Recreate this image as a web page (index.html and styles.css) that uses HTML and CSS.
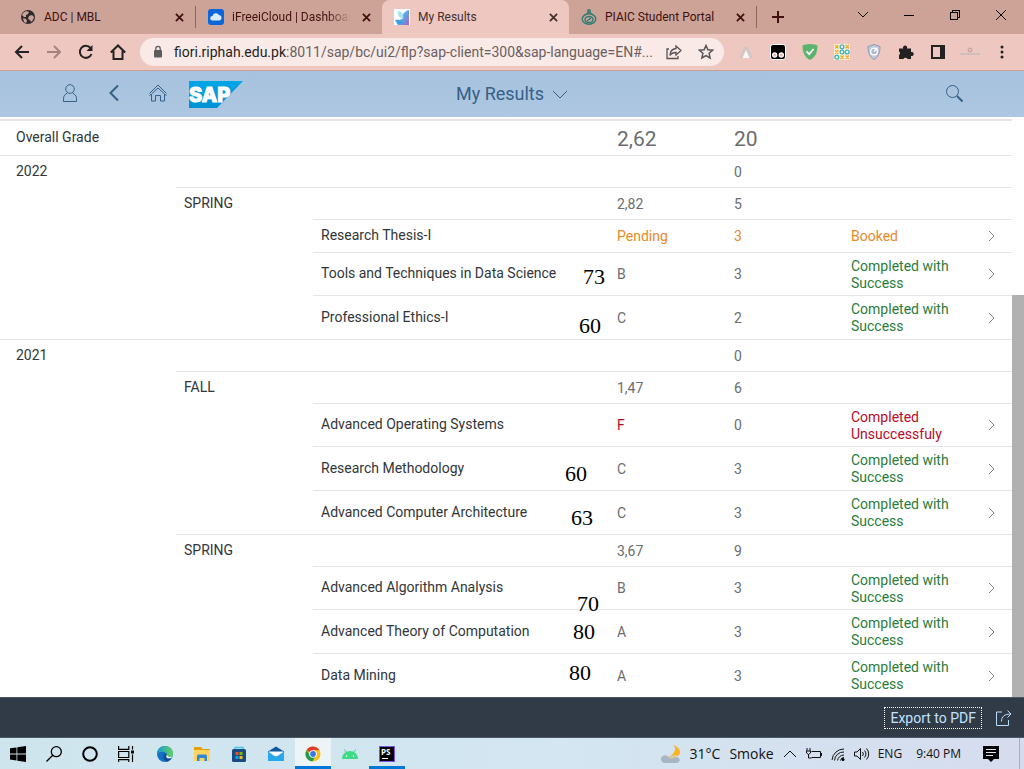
FILE: index.html
```
<!DOCTYPE html>
<html lang="en">
<head>
<meta charset="utf-8">
<title>My Results</title>
<link rel="stylesheet" href="styles.css">
</head>
<body>
<header class="browser">
  <div class="tabs">
    <div class="tab tab-first">
      <svg class="favicon" viewBox="0 0 16 16"><circle cx="8" cy="8" r="7" fill="#2b2b2d"/><path d="M3 4l3-2 3 1-1 2-2 1 0 2-2 0-2-2zM9 7l3-1 2 2-1 3-2 2-1-2-2-1zM3 9l3 1 1 2-1 2-2-1z" fill="#cda397"/></svg>
      <span class="tab-title">ADC | MBL</span>
      <button class="close" aria-label="Close tab"><svg viewBox="0 0 10 10"><path d="M1 1l8 8M9 1l-8 8"/></svg></button>
    </div>
    <div class="tab tab-second">
      <svg class="favicon" viewBox="0 0 16 16"><rect width="16" height="16" rx="3" fill="#0b66d8"/><path d="M4.500 11.500a2.300 2.300 0 0 1 0-4.600 3.500 3.500 0 0 1 6.500-.8 2.800 2.800 0 0 1 .8 5.400z" fill="#d8ecff"/></svg>
      <span class="tab-title fade">iFreeiCloud | Dashboard</span>
      <button class="close" aria-label="Close tab"><svg viewBox="0 0 10 10"><path d="M1 1l8 8M9 1l-8 8"/></svg></button>
    </div>
    <div class="tab active">
      <svg class="favicon" viewBox="0 0 16 16"><defs><linearGradient id="petal" x1="0" y1="0" x2="1" y2="1"><stop offset="0" stop-color="#b9d4f3"/><stop offset=".5" stop-color="#5fa6e4"/><stop offset="1" stop-color="#a263c4"/></linearGradient></defs><rect width="16" height="16" fill="#fff"/><path d="M15 1v15H4c-1-1-2-2-1.500-4 3-1 4-2 6-2C7 7 10 2 15 1z" fill="url(#petal)"/><path d="M4 2c4 0 6 4 5 8C5 9 3 5 4 2z" fill="#a7e2f5"/><path d="M1 11c4-1 8 0 8 3-3 2-6 1-8-3z" fill="#3aa1e2"/></svg>
      <span class="tab-title">My Results</span>
      <button class="close" aria-label="Close tab"><svg viewBox="0 0 10 10"><path d="M1 1l8 8M9 1l-8 8"/></svg></button>
    </div>
    <div class="tab">
      <svg class="favicon" viewBox="0 0 16 16" fill="none" stroke="#2f7c72" stroke-width="1.400"><ellipse cx="8" cy="10" rx="6.800" ry="5.200"/><ellipse cx="8" cy="10.500" rx="4" ry="3"/><circle cx="8" cy="2" r="1.300"/><path d="M8 3l-4 3M8 3l4 3M6 12l4-3"/></svg>
      <span class="tab-title">PIAIC Student Portal</span>
      <button class="close" aria-label="Close tab"><svg viewBox="0 0 10 10"><path d="M1 1l8 8M9 1l-8 8"/></svg></button>
    </div>
    <button class="new-tab" aria-label="New tab"><svg viewBox="0 0 12 12"><path d="M6 0v12M0 6h12"/></svg></button>
    <div class="window-buttons">
      <button aria-label="Search tabs"><svg viewBox="0 0 12 12"><path d="M1 3l5 5 5-5"/></svg></button>
      <button aria-label="Minimize"><svg viewBox="0 0 12 12" shape-rendering="crispEdges"><path d="M1 6.500h10"/></svg></button>
      <button aria-label="Restore"><svg viewBox="0 0 12 12" shape-rendering="crispEdges"><path d="M1.500 3.500h7v7h-7zM3.500 3V1.500h7v7H9"/></svg></button>
      <button aria-label="Close"><svg viewBox="0 0 12 12"><path d="M1 1l10 10M11 1L1 11"/></svg></button>
    </div>
  </div>
  <div class="toolbar">
    <nav class="nav-buttons">
      <button aria-label="Back"><svg viewBox="0 0 16 16"><path d="M15 8H2M8 2L2 8l6 6"/></svg></button>
      <button class="dim" aria-label="Forward"><svg viewBox="0 0 16 16"><path d="M1 8h13M8 2l6 6-6 6"/></svg></button>
      <button aria-label="Reload"><svg viewBox="0 0 16 16"><path d="M13.500 10A6 6 0 1 1 12.500 4"/><path d="M14.500 1v6h-6z" fill="#222" stroke="none"/></svg></button>
      <button aria-label="Home"><svg viewBox="0 0 16 16"><path d="M.8 8.500L8 1.500l7.200 7M3.500 7v8h9V7"/></svg></button>
    </nav>
    <div class="address">
      <svg class="lock" viewBox="0 0 10 14"><rect x="1" y="5" width="8" height="7.500" rx="1" fill="#5f5a5d"/><path d="M2.800 5V3.500a2.200 2.200 0 0 1 4.400 0V5" fill="none" stroke="#5f5a5d" stroke-width="1.300"/></svg>
      <span class="url"><b>fiori.riphah.edu.pk</b>:8011/sap/bc/ui2/flp?sap-client=300&amp;sap-language=EN#...</span>
      <button aria-label="Share"><svg viewBox="0 0 16 16" stroke-width="1.300"><path d="M3 5H1v9.500h11V12M10 2l5 4.500-5 4.500V8.500c-3 0-5 1-6 3 0-4 2-6.500 6-7z"/></svg></button>
      <button aria-label="Bookmark"><svg viewBox="0 0 16 16" stroke-width="1.500"><path d="M8 1.500l1.900 4.300 4.700.4-3.500 3.100 1 4.600L8 11.500l-4.100 2.400 1-4.600-3.500-3.100 4.700-.4z"/></svg></button>
    </div>
    <div class="extensions">
      <button aria-label="Extension"><svg viewBox="0 0 16 16"><path d="M1 14L6 3h4l5 11h-3L8 6l-4 8z" fill="#cfc8c6"/><path d="M4.500 14L8 6l3.500 8z" fill="#f8f6f5"/></svg></button>
      <button aria-label="Tampermonkey"><svg viewBox="0 0 16 16"><rect x=".5" y=".5" width="15" height="15" rx="2.500" fill="#000" stroke="#fff"/><circle cx="4.700" cy="11" r="2.700" fill="#fff"/><circle cx="11.300" cy="11" r="2.700" fill="#fff"/><circle cx="4.700" cy="11" r="1.500" fill="#e9b9ae"/><circle cx="11.300" cy="11" r="1.500" fill="#e9b9ae"/></svg></button>
      <button aria-label="AdGuard"><svg viewBox="0 0 16 16"><path d="M8 0c3 0 6 .8 7.500 1.500C15.500 9 13 13.500 8 16 3 13.500.5 9 .5 1.500 2 .8 5 0 8 0z" fill="#5bb46c"/><path d="M4.500 7.500l2.700 2.700L11.500 5" fill="none" stroke="#fff" stroke-width="1.800"/></svg></button>
      <button aria-label="Puzzle grid"><svg viewBox="0 0 16 16"><path d="M0 0h16v16H0z" fill="#fff3da"/><g fill="none" stroke-width="1.400"><path d="M1 1l3.500 3.500M4.500 1L1 4.500M11.500 1L15 4.500M15 1l-3.500 3.500M1 6.300l3.500 3.500M4.500 6.300L1 9.800M6.300 11.500l3.500 3.500M9.800 11.500L6.300 15M11.500 11.500L15 15M15 11.500L11.500 15" stroke="#f3a92e"/><circle cx="8" cy="2.800" r="1.900" stroke="#39b7c2"/><circle cx="8" cy="8" r="1.900" stroke="#39b7c2"/><circle cx="13.200" cy="8" r="1.900" stroke="#39b7c2"/><circle cx="2.800" cy="13.200" r="1.900" stroke="#39b7c2"/></g></svg></button>
      <button aria-label="Privacy shield"><svg viewBox="0 0 16 16"><path d="M8 .5l6 2c0 6-1.500 10.500-6 13C3.500 13 2 8.500 2 2.500z" fill="#bfc9da" stroke="#8c9ab2"/><circle cx="8" cy="7.500" r="3.400" fill="#aab8cd" stroke="#fff" stroke-width="1.300"/><path d="M8 7.500L11 4" stroke="#fff" stroke-width="1.200"/></svg></button>
      <button aria-label="Extensions"><svg viewBox="0 0 16 16"><path d="M1 4.500h4.200a2.100 2.100 0 1 1 3.800 0h4V8a2.100 2.100 0 1 1 0 4v3H9.500a2.200 2.200 0 0 0-4 0H1v-4a2.100 2.100 0 0 0 0-3.600z" fill="#222"/></svg></button>
      <button aria-label="Side panel"><svg viewBox="0 0 16 16"><path d="M2 2h12v12H2z" fill="none" stroke="#222" stroke-width="2"/><path d="M10 2h4v12h-4z" fill="#222"/></svg></button>
      <button aria-label="Profile"><svg viewBox="0 0 20 16"><circle cx="10" cy="6" r="2.500" fill="#c9a9a5"/><circle cx="10" cy="6" r="1" fill="#eec8c0"/><path d="M0 10h20" stroke="#c9b8bd" stroke-width="1.500"/></svg></button>
      <button aria-label="Menu"><svg viewBox="0 0 16 16" fill="#222"><circle cx="8" cy="3" r="1.500"/><circle cx="8" cy="8" r="1.500"/><circle cx="8" cy="13" r="1.500"/></svg></button>
    </div>
  </div>
</header>

<div class="shell">
  <div class="shell-left">
    <button aria-label="User"><svg viewBox="0 0 20 20"><circle cx="10" cy="6" r="4.300"/><path d="M3.500 18.500v-3c0-3 2-4.500 3.800-5.300M12.700 10.200c1.800.8 3.800 2.300 3.800 5.300v3h-13"/></svg></button>
    <button aria-label="Back"><svg viewBox="0 0 20 20" stroke-width="2"><path d="M14 2.500L6.500 10l7.500 7.500"/></svg></button>
    <button aria-label="Home"><svg viewBox="0 0 20 20"><path d="M1.500 10.500L10 2l8.500 8.500M1.500 12.500l2-1.500v7h4v-5.500h5V18h4v-7l2 1.500M4 10.500L10 5l6 5.500"/></svg></button>
    <svg class="sap-logo" viewBox="0 0 54 27"><defs><linearGradient id="sap" x1="0" y1="0" x2="0" y2="1"><stop offset="0" stop-color="#00a6e6"/><stop offset="1" stop-color="#0090d4"/></linearGradient></defs><path d="M0 0h54L28 27H0z" fill="url(#sap)"/><text x="0" y="21" class="sap-text">SAP</text></svg>
  </div>
  <button class="shell-title">My Results <svg viewBox="0 0 16 16"><path d="M1 6l7 7 7-7"/></svg></button>
  <div class="shell-right"><button aria-label="Search"><svg viewBox="0 0 20 20"><circle cx="8.500" cy="8.500" r="6"/><path d="M13 13l5.500 5.500" stroke-width="2"/></svg></button></div>
</div>

<main class="content">
  <div class="results">
  <table>
    <colgroup><col class="c-year"><col class="c-term"><col><col class="c-value"><col class="c-value"><col class="c-status"><col class="c-arrow"></colgroup>
    <tbody>
    <tr class="overall"><th colspan="3">Overall Grade</th><td>2,62</td><td>20</td><td></td><td></td></tr>
    <tr><th>2022</th><td></td><td></td><td></td><td>0</td><td></td><td></td></tr>
    <tr><td class="blank"></td><th>SPRING</th><td></td><td>2,82</td><td>5</td><td></td><td></td></tr>
    <tr class="pending"><td class="blank" colspan="2"></td><th>Research Thesis-I</th><td>Pending</td><td>3</td><td>Booked</td><td class="arrow"><svg viewBox="0 0 8 12"><path d="M1 1l5 5-5 5"/></svg></td></tr>
    <tr class="course lead"><td class="blank" colspan="2"></td><th>Tools and Techniques in Data Science</th><td>B</td><td>3</td><td class="good">Completed with Success</td><td class="arrow"><svg viewBox="0 0 8 12"><path d="M1 1l5 5-5 5"/></svg></td></tr>
    <tr class="course"><td class="blank" colspan="2"></td><th>Professional Ethics-I</th><td>C</td><td>2</td><td class="good">Completed with Success</td><td class="arrow"><svg viewBox="0 0 8 12"><path d="M1 1l5 5-5 5"/></svg></td></tr>
    <tr><th>2021</th><td></td><td></td><td></td><td>0</td><td></td><td></td></tr>
    <tr><td class="blank"></td><th>FALL</th><td></td><td>1,47</td><td>6</td><td></td><td></td></tr>
    <tr class="course lead"><td class="blank" colspan="2"></td><th>Advanced Operating Systems</th><td class="bad">F</td><td>0</td><td class="bad">Completed Unsuccessfuly</td><td class="arrow"><svg viewBox="0 0 8 12"><path d="M1 1l5 5-5 5"/></svg></td></tr>
    <tr class="course"><td class="blank" colspan="2"></td><th>Research Methodology</th><td>C</td><td>3</td><td class="good">Completed with Success</td><td class="arrow"><svg viewBox="0 0 8 12"><path d="M1 1l5 5-5 5"/></svg></td></tr>
    <tr class="course"><td class="blank" colspan="2"></td><th>Advanced Computer Architecture</th><td>C</td><td>3</td><td class="good">Completed with Success</td><td class="arrow"><svg viewBox="0 0 8 12"><path d="M1 1l5 5-5 5"/></svg></td></tr>
    <tr><td class="blank"></td><th>SPRING</th><td></td><td>3,67</td><td>9</td><td></td><td></td></tr>
    <tr class="course lead"><td class="blank" colspan="2"></td><th>Advanced Algorithm Analysis</th><td>B</td><td>3</td><td class="good">Completed with Success</td><td class="arrow"><svg viewBox="0 0 8 12"><path d="M1 1l5 5-5 5"/></svg></td></tr>
    <tr class="course"><td class="blank" colspan="2"></td><th>Advanced Theory of Computation</th><td>A</td><td>3</td><td class="good">Completed with Success</td><td class="arrow"><svg viewBox="0 0 8 12"><path d="M1 1l5 5-5 5"/></svg></td></tr>
    <tr class="course"><td class="blank" colspan="2"></td><th>Data Mining</th><td>A</td><td>3</td><td class="good">Completed with Success</td><td class="arrow"><svg viewBox="0 0 8 12"><path d="M1 1l5 5-5 5"/></svg></td></tr>
    </tbody>
  </table>
  <span class="note note-tools">73</span>
  <span class="note note-ethics">60</span>
  <span class="note note-method">60</span>
  <span class="note note-arch">63</span>
  <span class="note note-algo">70</span>
  <span class="note note-theory">80</span>
  <span class="note note-mining">80</span>
  </div>
  <div class="scrollbar"><div class="thumb"></div></div>
</main>

<footer class="actions">
  <button class="export">Export to PDF</button>
  <button class="share" aria-label="Share"><svg viewBox="0 0 18 18"><path d="M7 3H1.500v13.500h12V11M6.500 12.500c0-5 3-7.500 9.500-7.500M12.500 1.500L16 5l-3.500 3.500"/></svg></button>
</footer>

<div class="taskbar">
  <div class="system">
    <button aria-label="Start"><svg viewBox="0 0 16 16"><path d="M0 2.300l6.500-.9v6H0zM7.300 1.300L16 0v7.400H7.300zM0 8.400h6.500v6L0 13.500zM7.300 8.400H16V16l-8.700-1.300z"/></svg></button>
    <button aria-label="Search"><svg viewBox="0 0 16 16" fill="none" stroke="#000" stroke-width="1.300"><circle cx="10.300" cy="5.700" r="5"/><path d="M6.700 9.300L.5 15.500"/></svg></button>
    <button aria-label="Cortana"><svg viewBox="0 0 16 16" fill="none" stroke="#000" stroke-width="2"><circle cx="8" cy="8" r="6.800"/></svg></button>
    <button aria-label="Task view"><svg viewBox="0 0 16 16" fill="none" stroke="#000" stroke-width="1.200"><path d="M.6 0v3.400h10.200V0M.6 5.500h10.200v6H.6zM.6 16v-2.400h10.200V16M14.500 0v3.500M14.500 8.500V16"/><path d="M13 4.500h3v3h-3z" fill="#000" stroke="none"/></svg></button>
  </div>
  <div class="apps">
    <button aria-label="Edge"><svg viewBox="0 0 16 16"><defs><linearGradient id="edge" x1="0" y1="0" x2="1" y2="0"><stop offset="0" stop-color="#1599d9"/><stop offset="1" stop-color="#63d35b"/></linearGradient></defs><circle cx="8" cy="8" r="8" fill="#1372c4"/><path d="M0 8a8 8 0 0 1 16 0c0 3-2 4-4 4-2.500 0-3-1-2-2.500C11 6.500 4 3.500 0 8z" fill="url(#edge)"/><path d="M9.500 10c-1.500 2 1 3.500 5 2.300-1.500 2-3.500 3-4 3.200C6 14.500 5 9 9 7.500c1 .5 1 1.500.5 2.500z" fill="#114b8e"/><path d="M9.700 8.300c1 3 3.800 3.700 6 1.600-1 2.300-5.500 3.400-6.300.8z" fill="#fff"/></svg></button>
    <button aria-label="Files"><svg viewBox="0 0 16 16"><path d="M0 1h7l1.500 2H16v12H0z" fill="#e3a008"/><path d="M0 4h16v11H0z" fill="#ffd35c"/><path d="M3 15v-5l1-1.500h8l1 1.500v5h-2.500v-3h-5v3z" fill="#2d89d6"/></svg></button>
    <button aria-label="Store"><svg viewBox="0 0 16 16"><path d="M4 4V1.500h8V4" fill="none" stroke="#43c3f0" stroke-width="1.300"/><rect x="1" y="3" width="14" height="13" rx="1.500" fill="#1a4a80"/><path d="M4.500 6h3v3h-3z" fill="#f25022"/><path d="M8.500 6h3v3h-3z" fill="#7fba00"/><path d="M4.500 10h3v3h-3z" fill="#00a4ef"/><path d="M8.500 10h3v3h-3z" fill="#ffb900"/></svg></button>
    <button aria-label="Mail"><svg viewBox="0 0 16 16"><path d="M0 5.500L8 .5l8 5V15H0z" fill="#0c5aa0"/><path d="M1 5.500h14v5H1z" fill="#fff"/><path d="M0 5.500L8 11l8-5.500V15H0z" fill="#26a8ea"/></svg></button>
    <button class="current" aria-label="Chrome"><svg viewBox="0 0 16 16"><circle cx="8" cy="8" r="7.500" fill="#fbc116"/><path d="M8 8L1.500 4.200A7.500 7.500 0 0 1 14.500 4.300H8z" fill="#e33b2e"/><path d="M1.500 4.200a7.500 7.500 0 0 0 5.800 11.300L10.500 10 5 9z" fill="#239a4b"/><circle cx="8" cy="8" r="3.800" fill="#fff"/><circle cx="8" cy="8" r="2.900" fill="#3b78e7"/></svg></button>
    <button aria-label="Android"><svg viewBox="0 0 16 16"><path d="M0 13a8 8 0 0 1 16 0z" fill="#3ddc84"/><path d="M2.500 3.500l2 3.500M13.500 3.500l-2 3.500" stroke="#3ddc84"/><circle cx="4.500" cy="10" r=".8" fill="#fff"/><circle cx="11.500" cy="10" r=".8" fill="#fff"/></svg></button>
    <button class="running" aria-label="PhpStorm"><svg viewBox="0 0 16 16"><rect width="16" height="16" fill="#7b52f4"/><path d="M1 1h14v14H1z"/><path d="M3 12.500h6" stroke="#fff"/><text x="2" y="9" class="ps-text">PS</text></svg></button>
  </div>
  <div class="tray">
    <button class="weather"><svg viewBox="0 0 22 20"><path d="M14 1c3 2 3 7-2 10l7 1c4-3 2-9-5-11z" fill="#f9b522"/><path d="M5 19a5 4 0 0 1-1-7c2-1 4-1 5 1 3-2 7-2 8 0 5 0 5 6 0 6z" fill="#a9b5c2"/><path d="M9 13c3-2 7-2 8 0-3 2-7 2-8 0z" fill="#dcc795"/></svg><span>31°C</span><span>Smoke</span></button>
    <button aria-label="Show hidden icons"><svg viewBox="0 0 16 16"><path d="M2 11l6-6 6 6"/></svg></button>
    <button aria-label="Battery"><svg viewBox="0 0 16 16"><path d="M5.500 5.500h9v6h-9M15.500 7v3M1 2v3M4 2v3M.5 5h4v2l-2 1.500-2-1.500zM2.500 8v4h3"/></svg></button>
    <button aria-label="Wi-Fi"><svg viewBox="0 0 16 16"><path d="M2 14A12 12 0 0 1 14 3M4.500 14.500A9 9 0 0 1 14 6M7.500 14.500A6.500 6.500 0 0 1 14 9M10.500 14.500a3.500 3.500 0 0 1 3.500-3"/><circle cx="13" cy="13.500" r="1.500" fill="#000" stroke="none"/></svg></button>
    <button aria-label="Volume"><svg viewBox="0 0 16 16"><path d="M.5 6h2.500l3.500-3.500v11L3 10H.5zM8.500 6a3 3 0 0 1 0 4M10.500 4.500a5 5 0 0 1 0 7M12.500 2.500a8 8 0 0 1 0 11"/></svg></button>
    <button class="small">ENG</button>
    <button class="small clock">9:40 PM</button>
    <button class="notify" aria-label="Notifications"><svg viewBox="0 0 16 16"><path d="M0 0h16v13h-5l-3 3-3-3H0z" fill="#000" stroke="none"/><path d="M3 3.500h10M3 6.500h10M3 9.500h7" stroke="#dfe6f0"/></svg></button>
  </div>
</div>
</body>
</html>
```
FILE: styles.css
```
* { box-sizing: border-box; }
body {
  margin: 0;
  height: 100vh;
  display: flex;
  flex-direction: column;
  overflow: hidden;
  background: #fff;
  font-family: Roboto, sans-serif;
  font-size: 14px;
  color: #32363a;
}
button {
  border: 0;
  margin: 0;
  padding: 0;
  background: none;
  font: inherit;
  color: inherit;
  display: flex;
  align-items: center;
  justify-content: center;
}
svg { display: block; flex: none; }

/* Browser frame */
.tabs { display: flex; height: 34px; background: #cda397; color: #42100f; }
.tab {
  flex: 0 0 187px;
  min-width: 0;
  display: flex;
  align-items: center;
  gap: 8px;
  padding: 0 9px 0 12px;
  font-size: 12px;
}
.tab-first { flex-basis: 196px; padding-left: 20px; border-right: 1px solid; border-image: linear-gradient(transparent 20%, #93645c 20%, #93645c 80%, transparent 80%) 1; }
.tab-second { flex-basis: 186px; border-bottom-right-radius: 8px; }
.tab.active { background: #eec8c0; border-radius: 8px 8px 0 0; color: #45302e; }
.favicon { width: 16px; height: 16px; }
.tab-title { flex: 1; min-width: 0; white-space: nowrap; overflow: hidden; }
.fade { mask-image: linear-gradient(90deg, #000 80%, transparent); }
.close { width: 14px; height: 14px; }
.close svg { width: 9px; height: 9px; stroke: currentColor; stroke-width: 2; }
.new-tab { width: 43px; border-left: 1px solid; border-image: linear-gradient(transparent 20%, #93645c 20%, #93645c 80%, transparent 80%) 1; }
.new-tab svg { width: 12px; height: 12px; stroke: #42100f; stroke-width: 2; }
.window-buttons { display: flex; margin-left: auto; height: 29px; }
.window-buttons button { width: 46px; }
.window-buttons svg { width: 12px; height: 12px; fill: none; stroke: #000; }
.toolbar {
  display: flex;
  align-items: center;
  height: 37px;
  padding: 0 6px;
  background: #eec8c0;
  border-bottom: 1px solid #c9a097;
}
.nav-buttons, .extensions { display: flex; }
.nav-buttons button, .extensions button { width: 32px; height: 28px; }
.nav-buttons svg { width: 16px; height: 16px; fill: none; stroke: #222; stroke-width: 2; }
.nav-buttons .dim svg { stroke: #a5827e; }
.extensions svg { height: 16px; }
.address {
  flex: 1;
  display: flex;
  align-items: center;
  height: 28px;
  min-width: 0;
  margin: 0 6px;
  padding: 0 2px 0 13px;
  border-radius: 14px;
  background: #f9eae8;
}
.lock { width: 10px; height: 14px; }
.url { flex: 1; margin-left: 11px; font-size: 14px; color: #69605f; white-space: nowrap; overflow: hidden; }
.url b { font-weight: 400; color: #251f20; }
.address button { width: 32px; height: 28px; }
.address button svg { width: 16px; height: 16px; fill: none; stroke: #5a5254; }

/* Application header */
.shell {
  display: grid;
  grid-template-columns: 1fr auto 1fr;
  align-items: center;
  height: 46px;
  padding-bottom: 2px;
  background: linear-gradient(#a7c2de, #adc7e1);
  color: #346187;
}
.shell svg { fill: none; stroke: #346187; }
.shell-left { display: flex; align-items: center; padding-left: 48px; }
.shell-left button, .shell-right button { width: 44px; height: 44px; }
.shell-left button svg, .shell-right button svg { width: 20px; height: 20px; }
.shell .sap-logo { width: 54px; height: 27px; margin: 2px 0 0 9px; stroke: none; }
.sap-text { font: 800 20px Inter, sans-serif; fill: #fff; stroke: #fff; stroke-width: 1; }
.shell-title { gap: 8px; font-size: 18px; }
.shell-title svg { width: 16px; height: 16px; }
.shell-right { display: flex; justify-content: flex-end; padding-right: 48px; }

/* Results */
.content { flex: 1; min-height: 0; display: flex; overflow: hidden; }
.results { flex: 1; position: relative; padding-top: 2px; }
table { width: 100%; table-layout: fixed; border-collapse: separate; border-spacing: 0; }
.c-year { width: 176px; }
.c-term { width: 137px; }
.c-value { width: 117px; }
.c-status { width: 132px; }
.c-arrow { width: 37px; }
th, td {
  height: 32px;
  padding: 0 8px;
  border-top: 1px solid #e5e5e5;
  text-align: left;
  vertical-align: middle;
  font-weight: 400;
  line-height: 17px;
}
th { padding-bottom: 1px; }
tr > th:first-child { padding-left: 16px; }
td { padding-top: 1px; color: #6a6d70; }
.blank { border-top: 0; }
.overall th, .overall td { height: 36px; border-top: 2px solid #e5e5e5; }
.overall td { font-size: 21px; padding-top: 3px; }
.pending th, .pending td { height: 33px; }
.pending td { color: #e9892a; }
.course th, .course td { height: 44px; }
.lead th, .lead td { height: 43px; }
td.good { color: #2b7c3a; }
td.bad { color: #bb0a28; }
td.arrow { padding-top: 0; }
.arrow svg { width: 8px; height: 12px; margin-left: 5px; fill: none; stroke: #7c8084; }
/* Hand-added marks lying over the table */
.note { position: absolute; font: 22px/22px "Liberation Serif", serif; color: #000; }
.note-tools { left: 583px; top: 149px; }
.note-ethics { left: 579px; top: 198px; }
.note-method { left: 565px; top: 346px; }
.note-arch { left: 571px; top: 390px; }
.note-algo { left: 577px; top: 476px; }
.note-theory { left: 573px; top: 504px; }
.note-mining { left: 569px; top: 545px; }
.scrollbar { width: 12px; display: flex; flex-direction: column; justify-content: flex-end; }
.thumb { height: 69.3%; background: #b1b1b1; }

/* Footer actions */
.actions {
  display: flex;
  align-items: center;
  justify-content: flex-end;
  gap: 13px;
  height: 41px;
  padding-right: 11px;
  background: #303b47;
  border-top: 1px solid #4b5866;
  border-bottom: 1px solid #4b5866;
  color: #c3e2ff;
}
.export { height: 22px; padding: 0 5px; border: 1px dotted #fff; }
.share svg { width: 18px; height: 18px; fill: none; stroke: #b9dcfb; stroke-width: 1; }

/* Taskbar */
.taskbar {
  display: flex;
  height: 31px;
  background: linear-gradient(90deg, #cfe5ee, #d3e6f1 55%, #d6dcee);
  color: #111;
  font-family: "Open Sans", sans-serif;
}
.system, .apps, .tray { display: flex; }
.system button { width: 36px; }
.system svg, .apps svg { width: 16px; height: 16px; }
.apps { gap: 1px; margin-left: 3px; }
.apps button { width: 36px; padding-top: 3px; border-bottom: 3px solid transparent; }
.apps .current { background: #edf4f8; border-color: #0078d7; }
.apps .running { border-color: #0078d7; }
.ps-text { font: 700 8px "Open Sans", sans-serif; fill: #fff; }
.tray { margin-left: auto; gap: 8px; padding-right: 4px; }
.tray svg { width: 16px; height: 16px; fill: none; stroke: #111; }
.weather { gap: 9px; }
.tray .weather svg { width: 22px; height: 20px; stroke: none; }
.small { font-size: 12px; }
.clock { margin-left: 6px; }
.notify { margin-left: 14px; padding-right: 20px; border-right: 1px solid #a5b0c0; }
```
